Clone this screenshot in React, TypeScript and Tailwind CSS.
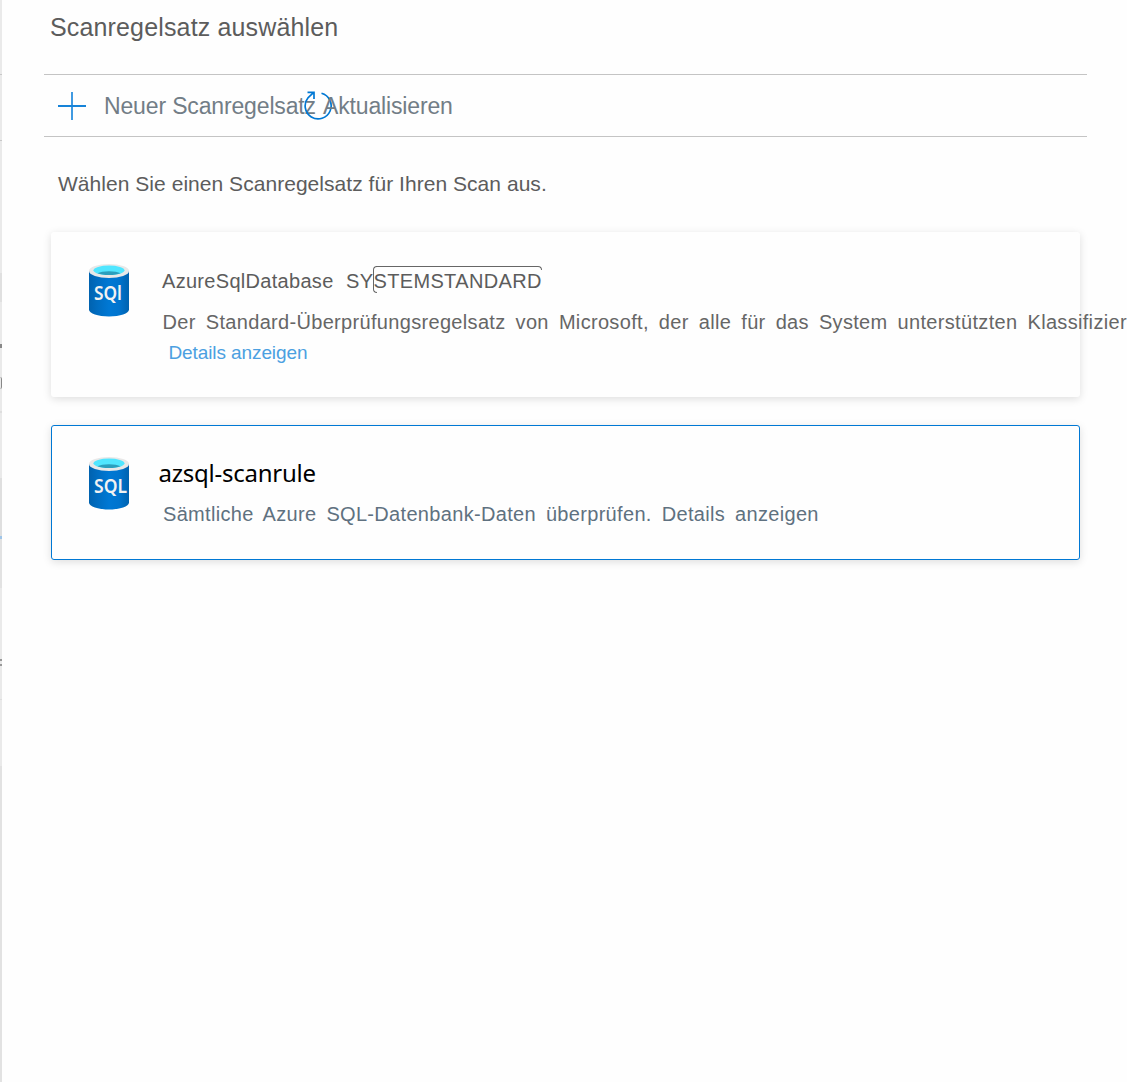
function SqlIcon({ label, id }: { label: string; id: string }) {
  return (
    <svg className="block h-[54px] w-[42px] shrink-0" viewBox="0 0 42 54" aria-hidden="true">
      <defs>
        <linearGradient id={id} x1="0" x2="1">
          <stop offset="0" stopColor="#0062af" />
          <stop offset=".2" stopColor="#006cc0" />
          <stop offset=".5" stopColor="#0078d4" />
          <stop offset=".75" stopColor="#0074ce" />
          <stop offset="1" stopColor="#0062af" />
        </linearGradient>
      </defs>
      <path d="M1 8v38.500c0 4 9 7 20 7s20-3 20-7V8z" fill={`url(#${id})`} />
      <ellipse cx="21" cy="8" rx="20" ry="7" fill="#e8e8e8" />
      <ellipse cx="21" cy="7.300" rx="15.500" ry="4.800" fill="#50e6ff" />
      <path d="M9.500 10.300C12 9 16 8.300 21 8.300s9 .7 11.500 2c-3 1.200-6.500 1.800-11.500 1.800s-8.500-.6-11.500-1.800z" fill="#2b9fbd" />
      <text x="6" y="36.700" fill="#f2f2f2" fontFamily="Noto Sans, sans-serif" fontWeight="600" fontSize="19" textLength={label === "SQL" ? 33 : 28} lengthAdjust="spacingAndGlyphs">{label}</text>
    </svg>
  );
}

function BackgroundEdge() {
  return (
    <div className="flex w-[2px] shrink-0 flex-col overflow-hidden bg-[#eaeaea]">
      <div className="mt-[74px] h-px shrink-0 bg-[#c8c8c8]" />
      <div className="mt-[65px] h-px shrink-0 bg-[#c8c8c8]" />
      <div className="mt-[132px] h-[29px] shrink-0 bg-[#e0e0e0]" />
      <div className="mt-[42px] h-[4px] shrink-0 bg-[#888]" />
      <div className="mt-[29px] h-[12px] w-[2px] shrink-0 rounded-r border-r border-[#888]" />
      <div className="mt-[22px] h-[2px] shrink-0 bg-[#dedede]" />
      <div className="mt-[65px] h-[58px] shrink-0 bg-[#dfdfdf]" />
      <div className="h-[3px] shrink-0 bg-[#9fc5e8]" />
      <div className="h-[49px] shrink-0 bg-[#e2e2e2]" />
      <div className="mt-[71px] h-[2px] shrink-0 bg-[#999]" />
      <div className="mt-[3px] h-[2px] shrink-0 bg-[#999]" />
      <div className="mt-[33px] h-px shrink-0 bg-[#dedede]" />
      <div className="mt-[66px] grow bg-[#e2e2e2]" />
    </div>
  );
}

export default function App() {
  return (
    <div className="flex h-[1082px] w-[1127px] overflow-hidden bg-[#fefefe] font-['Liberation_Sans',Arial,sans-serif] whitespace-nowrap text-[#5c5c5c]">
      <BackgroundEdge />
      <main className="flex min-w-0 grow flex-col pl-[42px]">
        <h1 className="h-[74px] pt-[12px] pl-[6px] text-[25px] leading-[30px] tracking-[0.15px]">Scanregelsatz auswählen</h1>
        <div className="flex h-[63px] w-[1043px] shrink-0 items-center border-y border-[#c4c4c4] text-[23px] tracking-[-0.15px] text-[#727d86]">
          <svg className="ml-[14px] h-[28px] w-[28px] shrink-0" viewBox="0 0 28 28" fill="none" strokeWidth="2" aria-hidden="true">
            <path d="M14 0v28" stroke="#409ae1" />
            <path d="M0 14h28" stroke="#1683d8" />
          </svg>
          <span className="ml-[18px] w-[200px] pt-px">Neuer Scanregelsatz</span>
          <svg className="-ml-[1px] h-[30px] w-[30px] shrink-0" viewBox="0 0 30 30" fill="none" stroke="#0078d4" strokeWidth="1.700" aria-hidden="true">
            <path d="M18.500 2.300A13 13 0 1 1 5.200 6.500L11 1.200M4.500 1.300H11V8" />
          </svg>
          <span className="-ml-[10px] pt-px">Aktualisieren</span>
        </div>
        <p className="mt-[35px] pl-[14px] text-[21px] leading-[24px] tracking-[0.04px]">Wählen Sie einen Scanregelsatz für Ihren Scan aus.</p>
        <section className="mt-[36px] ml-[7px] flex h-[165px] w-[1029px] shrink-0 rounded-[3px] bg-[#fefefe] pt-[31px] pl-[37px] shadow-[0_2px_8px_rgba(0,0,0,0.13)]">
          <SqlIcon label="SQl" id="system-cylinder" />
          <div className="ml-[32px] pt-[5px]">
            <div className="flex h-[26px] items-center text-[20px]">
              <span className="tracking-[0.3px]">AzureSqlDatabase</span>
              <span className="relative ml-[12.5px] tracking-[0.35px]">
                SYSTEMSTANDARD
                <span className="absolute top-0 left-[27px] h-[27px] w-[4px] rounded-l-[4px] border-y border-l border-[#666]" />
                <span className="absolute top-0 right-0 left-[30px] h-[4px] rounded-tr-[4px] border-t border-r border-[#666]" />
              </span>
            </div>
            <p className="mt-[16px] pl-[0.5px] text-[20px] leading-[24px] tracking-[0.32px] [word-spacing:4.2px] text-[#666]">Der Standard-Überprüfungsregelsatz von Microsoft, der alle für das System unterstützten Klassifizier</p>
            <a className="mt-[8px] block pl-[6.5px] text-[19px] leading-[22px] tracking-[-0.1px] text-[#4ba0e1]">Details anzeigen</a>
          </div>
        </section>
        <section className="mt-[28px] ml-[7px] flex h-[135px] w-[1029px] shrink-0 rounded-[3px] border border-[#0078d4] bg-[#fefefe] pt-[30px] pl-[36px] shadow-[0_2px_8px_rgba(0,0,0,0.13)]">
          <SqlIcon label="SQL" id="custom-cylinder" />
          <div className="ml-[28px]">
            <h2 className="pl-[0.5px] font-['Noto_Sans',sans-serif] text-[24px] leading-[34px] tracking-[-0.25px] text-black">azsql-scanrule</h2>
            <p className="mt-[12px] pl-[5px] text-[20px] leading-[24px] tracking-[0.32px] [word-spacing:4.1px] text-[#5f7180]">Sämtliche Azure SQL-Datenbank-Daten überprüfen. Details anzeigen</p>
          </div>
        </section>
      </main>
    </div>
  );
}
